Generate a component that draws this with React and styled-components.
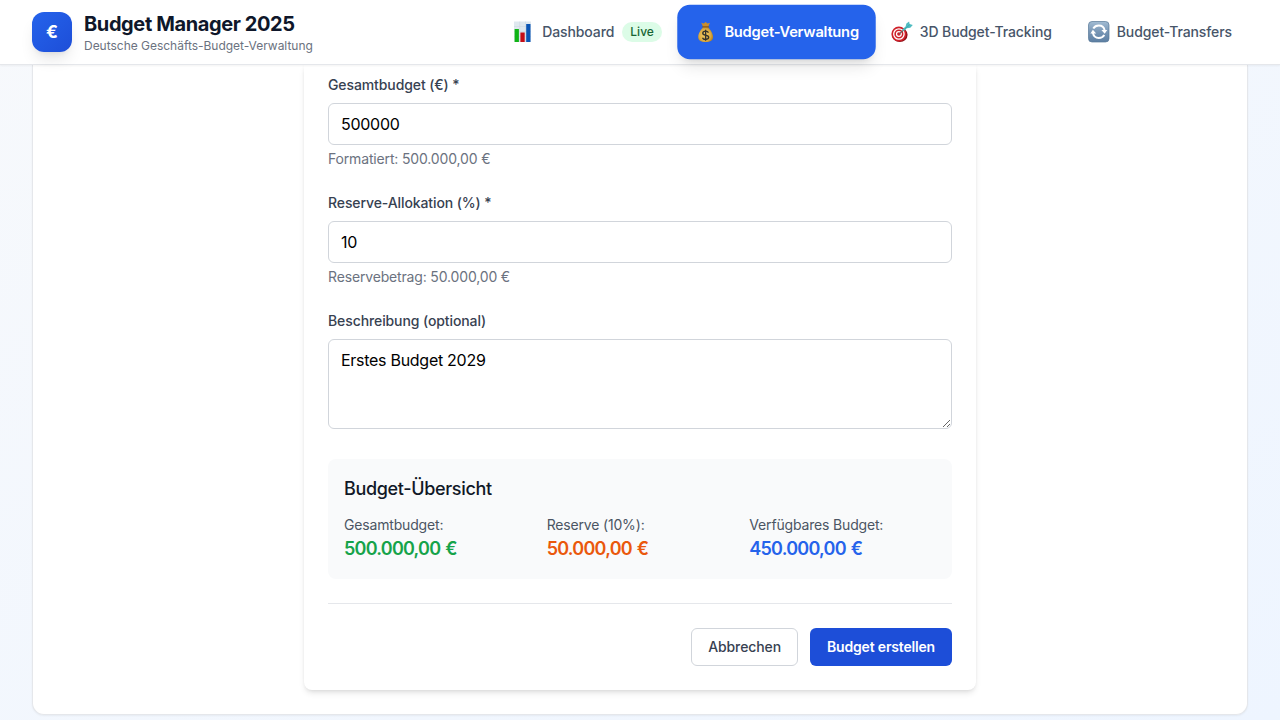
import React from "react";
import styled, { createGlobalStyle, css } from "styled-components";

const GlobalStyle = createGlobalStyle`
  *, *::before, *::after { box-sizing: border-box; }
  html, body { margin: 0; padding: 0; height: 100%; overflow: hidden; }
  body {
    font-family: Inter, "Liberation Sans", sans-serif;
    line-height: 1.5;
    color: #0f172a;
    -webkit-font-smoothing: antialiased;
  }
  h1, h2, p { margin: 0; }
  button, input, textarea { font: inherit; }
`;

const Page = styled.div`
  height: 720px;
  overflow: hidden;
  display: flex;
  flex-direction: column;
  background: linear-gradient(to bottom right, #f7f9fc, #eef5ff);
`;

const Header = styled.header`
  position: relative;
  z-index: 2;
  flex: none;
  height: 65px;
  padding: 0 32px;
  display: flex;
  align-items: center;
  justify-content: space-between;
  background: #fff;
  border-bottom: 1px solid #e5e7eb;
  box-shadow: 0 1px 2px rgba(0, 0, 0, 0.05);
`;

const Brand = styled.div`
  display: flex;
  align-items: center;
  gap: 12px;
`;

const Logo = styled.div`
  width: 40px;
  height: 40px;
  display: flex;
  align-items: center;
  justify-content: center;
  border-radius: 12px;
  background: linear-gradient(to bottom right, #2563eb, #1d4ed8);
  box-shadow: 0 10px 15px -3px rgba(0, 0, 0, 0.1), 0 4px 6px -4px rgba(0, 0, 0, 0.1);
  color: #fff;
  font-size: 17.5px;
  font-weight: 700;
`;

const BrandTitle = styled.h1`
  font-size: 20px;
  line-height: 28px;
  font-weight: 700;
  letter-spacing: -0.39px;
`;

const BrandSubtitle = styled.p`
  font-size: 12px;
  line-height: 16px;
  letter-spacing: -0.02px;
  color: #6b7280;
`;

const Nav = styled.nav`
  display: flex;
  align-items: center;
  gap: 4px;
`;

const NavItem = styled.a`
  height: 52px;
  padding: 0 16px;
  display: flex;
  align-items: center;
  border-radius: 12px;
  font-size: 14px;
  line-height: 20px;
  font-weight: 500;
  letter-spacing: -0.1px;
  white-space: nowrap;
  color: #475569;
  ${(p) =>
    p.$active &&
    css`
      color: #fff;
      font-weight: 600;
      letter-spacing: -0.23px;
      background: #2563eb;
      transform: scale(1.05);
      box-shadow: 0 10px 15px -3px rgba(0, 0, 0, 0.1), 0 4px 6px -4px rgba(0, 0, 0, 0.1);
    `}
`;

const NavIcon = styled.svg`
  flex: none;
  width: 22px;
  height: 22px;
  margin-right: 6.9px;
`;

const LiveBadge = styled.span`
  margin-left: 8px;
  padding: 2px 8px;
  border-radius: 999px;
  background: #dcfce7;
  color: #166534;
  font-size: 12px;
  line-height: 16px;
  letter-spacing: 0.03px;
`;

const Shell = styled.main`
  flex: none;
  margin: 0 32px;
  padding: 0 24px 24px;
  background: #fff;
  border: 1px solid #e5e7eb;
  border-top: 0;
  border-radius: 0 0 12px 12px;
  box-shadow: 0 1px 2px rgba(0, 0, 0, 0.05);
`;

const FormCard = styled.form`
  width: 672px;
  margin: 0 auto;
  padding: 10px 24px 24px;
  display: flex;
  flex-direction: column;
  gap: 24px;
  background: #fff;
  border-radius: 0 0 8px 8px;
  box-shadow: 0 4px 6px -1px rgba(0, 0, 0, 0.1), 0 2px 4px -2px rgba(0, 0, 0, 0.1),
    0 -4px 4px -1px rgba(0, 0, 0, 0.04);
`;

const Field = styled.div`
  display: flex;
  flex-direction: column;
`;

const Label = styled.label`
  margin-bottom: 8px;
  font-size: 14px;
  line-height: 20px;
  font-weight: 500;
  letter-spacing: -0.1px;
  color: #374151;
`;

const control = css`
  display: block;
  width: 100%;
  padding: 8px 12px;
  border: 1px solid #d1d5db;
  border-radius: 6px;
  background: #fff;
  color: #000;
  font-size: 16px;
  line-height: 24px;
  letter-spacing: -0.28px;
  outline: none;
`;

const Input = styled.input`
  ${control}
  height: 42px;
`;

const TextArea = styled.textarea`
  ${control}
  height: 90px;
  margin-bottom: 6px;
  resize: vertical;
`;

const Hint = styled.p`
  margin-top: 4px;
  font-size: 14px;
  line-height: 20px;
  letter-spacing: -0.16px;
  color: #6b7280;
`;

const Summary = styled.section`
  padding: 16px;
  border-radius: 8px;
  background: #f9fafb;
`;

const SummaryTitle = styled.h2`
  margin-bottom: 12px;
  font-size: 18px;
  line-height: 28px;
  font-weight: 500;
  letter-spacing: -0.34px;
  color: #111827;
`;

const SummaryGrid = styled.div`
  display: grid;
  grid-template-columns: repeat(3, 1fr);
  gap: 16px;
`;

const SummaryLabel = styled.p`
  font-size: 14px;
  line-height: 20px;
  letter-spacing: -0.17px;
  color: #4b5563;
`;

const SummaryValue = styled.p`
  font-size: 18px;
  line-height: 28px;
  font-weight: 600;
  letter-spacing: -0.76px;
  word-spacing: 1.2px;
  color: ${(p) => p.$color};
`;

const Actions = styled.div`
  padding-top: 24px;
  display: flex;
  justify-content: flex-end;
  gap: 12px;
  border-top: 1px solid #e5e7eb;
`;

const Button = styled.button`
  height: 38px;
  padding: 8px 16px;
  border: 1px solid ${(p) => (p.$primary ? "transparent" : "#d1d5db")};
  border-radius: 6px;
  background: ${(p) => (p.$primary ? "#1d4ed8" : "#fff")};
  background-clip: ${(p) => (p.$primary ? "border-box" : "padding-box")};
  color: ${(p) => (p.$primary ? "#fff" : "#374151")};
  font-size: 14px;
  line-height: 20px;
  font-weight: ${(p) => (p.$primary ? 600 : 500)};
  letter-spacing: ${(p) => (p.$primary ? "-0.18px" : "-0.1px")};
`;

const ChartIcon = () => (
  <NavIcon viewBox="0 0 22 22">
    <rect x="1" y="0.5" width="17" height="20.5" fill="#dfe8ef" />
    <path d="M1 5.5h17M1 10.5h17M1 15.5h17M6.7 .5V21M12.5 .5V21" stroke="#cbd6df" strokeWidth=".5" />
    <rect x="1.6" y="8" width="4.3" height="13" fill="#10b416" />
    <rect x="7.4" y="11.5" width="4.3" height="9.5" fill="#c60d17" />
    <rect x="13.2" y="3" width="4.3" height="18" fill="#0b55b5" />
  </NavIcon>
);

const MoneyIcon = () => (
  <NavIcon viewBox="0 0 22 22">
    <defs>
      <radialGradient id="bag" cx=".45" cy=".55" r=".6">
        <stop offset="0" stopColor="#f4cf66" />
        <stop offset=".65" stopColor="#dcab42" />
        <stop offset="1" stopColor="#a8761f" />
      </radialGradient>
    </defs>
    <path d="M6.8 2.2l2.4.8 1.8-1.6 1.8 1.6 2.4-.8-2 4.3H8.8z" fill="#c98d2c" />
    <path d="M8.8 5.8h4.4c1 2.2 4.900 5.400 4.900 10 0 3.300-2.300 4.800-7.100 4.800s-7.100-1.500-7.100-4.800c0-4.600 3.900-7.800 4.900-10z" fill="url(#bag)" />
    <path d="M8.300 6.200h5.400" stroke="#8b5a18" strokeWidth="1.200" strokeLinecap="round" />
    <path d="M13.700 11.600c-.5-1-1.400-1.400-2.700-1.400-1.600 0-2.700.7-2.700 1.900 0 2.800 5.600 1.200 5.600 4 0 1.300-1.200 2-2.900 2-1.500 0-2.600-.6-3-1.700M11 8.800v10.600" fill="none" stroke="#33322b" strokeWidth="1.300" />
  </NavIcon>
);

const TargetIcon = () => (
  <NavIcon viewBox="0 0 22 22">
    <ellipse cx="8.800" cy="13.800" rx="7.800" ry="7.200" fill="#8e1018" />
    <circle cx="7.900" cy="13" r="7.500" fill="#cf2029" />
    <circle cx="7.900" cy="13" r="5.200" fill="none" stroke="#fff" strokeWidth="1.300" />
    <circle cx="7.900" cy="13" r="2.400" fill="none" stroke="#fff" strokeWidth="1.200" />
    <path d="M8.300 12.700l6-4.900" stroke="#6f5a58" strokeWidth="1.100" />
    <path d="M12 10l-.7-1.500 3.300-2.900.8-3 2.700-2 .5 2.500 3.200.9-2.500 2.700-3.400.5-2.700 2.400z" fill="#4fbcc1" />
    <path d="M13.500 8.300l5-4.400" stroke="#2f9ba1" strokeWidth=".6" />
  </NavIcon>
);

const SyncIcon = () => (
  <NavIcon viewBox="0 0 22 22">
    <defs>
      <linearGradient id="tile" x1="0" y1="0" x2="0" y2="1">
        <stop offset="0" stopColor="#a2bcd3" />
        <stop offset=".5" stopColor="#7896b5" />
        <stop offset="1" stopColor="#5d7fa3" />
      </linearGradient>
    </defs>
    <rect x=".5" y=".5" width="20.500" height="20.500" rx="3.500" fill="url(#tile)" stroke="#587898" strokeWidth=".7" />
    <path d="M5.300 7.600c1.200-2 3.100-3 5.500-3 3.200 0 5.300 1.900 5.900 5M16.300 13.900c-1.200 2-3.100 3-5.500 3-3.200 0-5.300-1.900-5.900-5" fill="none" stroke="#fff" strokeWidth="2" />
    <path d="M13.400 8.900h5.800l-2.500 3.900zM8.200 12.600H2.400l2.500-3.900z" fill="#fff" />
  </NavIcon>
);

const fields = [
  { id: "total", label: "Gesamtbudget (€) *", value: "500000", hint: "Formatiert: 500.000,00 €" },
  { id: "reserve", label: "Reserve-Allokation (%) *", value: "10", hint: "Reservebetrag: 50.000,00 €" },
];

const totals = [
  { label: "Gesamtbudget:", value: "500.000,00 €", color: "#16a34a" },
  { label: "Reserve (10%):", value: "50.000,00 €", color: "#ea580c" },
  { label: "Verfügbares Budget:", value: "450.000,00 €", color: "#2563eb" },
];

export default function App() {
  return (
    <Page>
      <GlobalStyle />
      <Header>
        <Brand>
          <Logo>€</Logo>
          <div>
            <BrandTitle>Budget Manager 2025</BrandTitle>
            <BrandSubtitle>Deutsche Geschäfts-Budget-Verwaltung</BrandSubtitle>
          </div>
        </Brand>
        <Nav>
          <NavItem>
            <ChartIcon />
            Dashboard
            <LiveBadge>Live</LiveBadge>
          </NavItem>
          <NavItem $active>
            <MoneyIcon />
            Budget-Verwaltung
          </NavItem>
          <NavItem>
            <TargetIcon />
            3D Budget-Tracking
          </NavItem>
          <NavItem>
            <SyncIcon />
            Budget-Transfers
          </NavItem>
        </Nav>
      </Header>
      <Shell>
        <FormCard>
          {fields.map((f) => (
            <Field key={f.id}>
              <Label htmlFor={f.id}>{f.label}</Label>
              <Input id={f.id} defaultValue={f.value} />
              <Hint>{f.hint}</Hint>
            </Field>
          ))}
          <Field>
            <Label htmlFor="description">Beschreibung (optional)</Label>
            <TextArea id="description" defaultValue="Erstes Budget 2029" />
          </Field>
          <Summary>
            <SummaryTitle>Budget-Übersicht</SummaryTitle>
            <SummaryGrid>
              {totals.map((t) => (
                <div key={t.label}>
                  <SummaryLabel>{t.label}</SummaryLabel>
                  <SummaryValue $color={t.color}>{t.value}</SummaryValue>
                </div>
              ))}
            </SummaryGrid>
          </Summary>
          <Actions>
            <Button type="button">Abbrechen</Button>
            <Button type="button" $primary>
              Budget erstellen
            </Button>
          </Actions>
        </FormCard>
      </Shell>
    </Page>
  );
}
